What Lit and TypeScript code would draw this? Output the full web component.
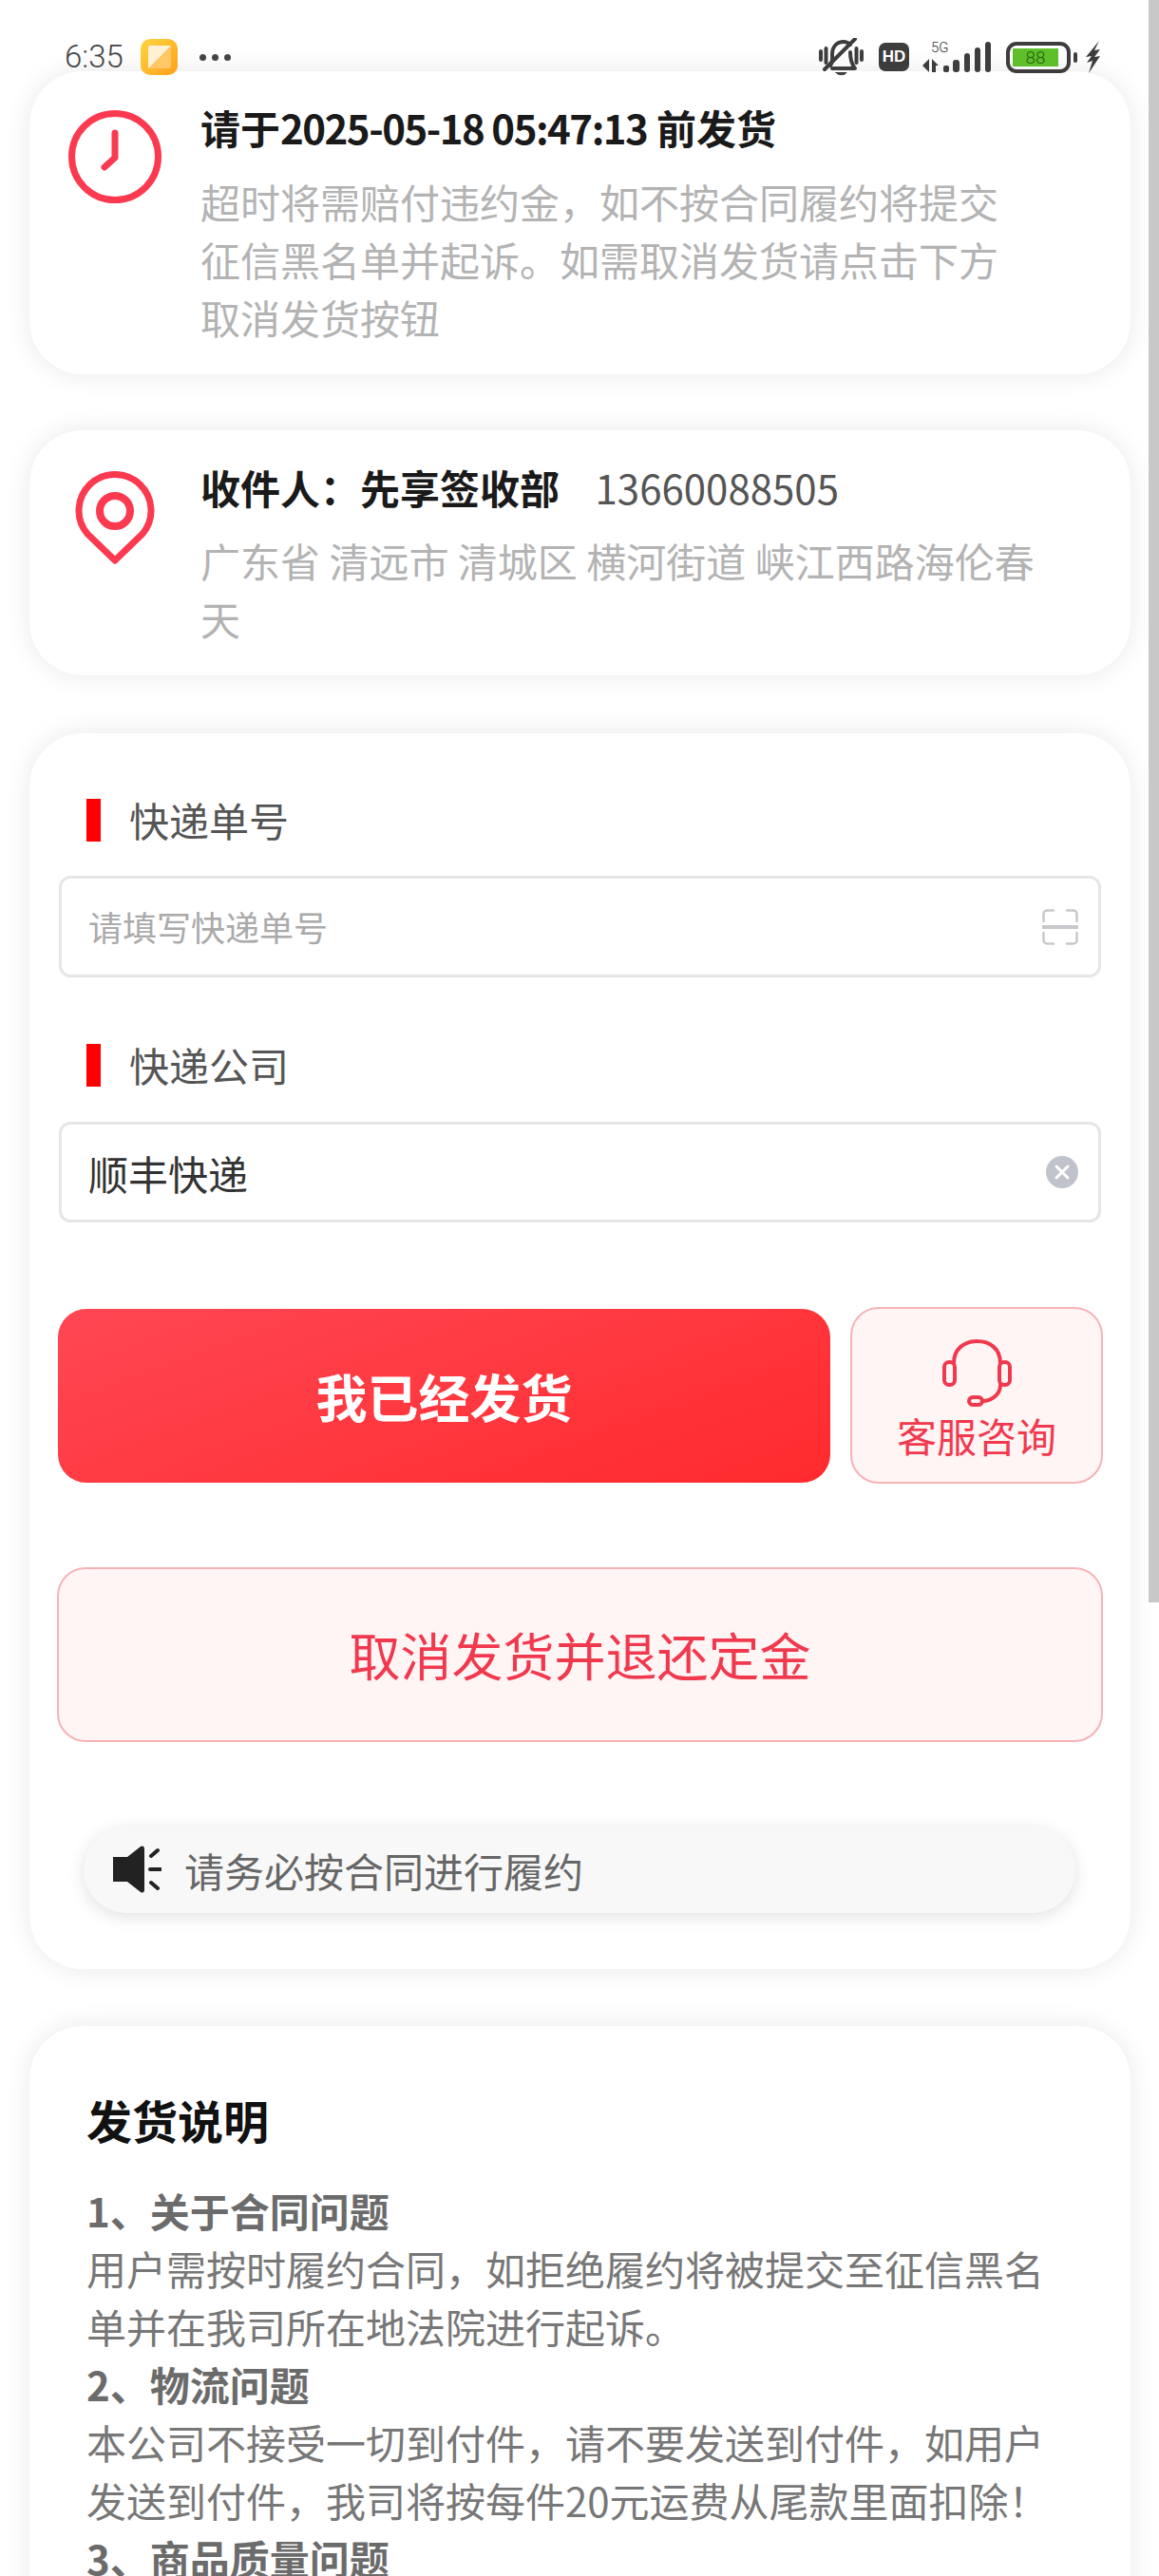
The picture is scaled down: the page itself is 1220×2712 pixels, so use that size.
import { LitElement, html, css } from "lit";
import { customElement } from "lit/decorators.js";

const clockIcon = html`<svg width="98" height="98" viewBox="0 0 98 98" fill="none" stroke="#fb3a50" stroke-width="7" stroke-linecap="round" stroke-linejoin="round">
  <circle cx="49" cy="49" r="45.5"></circle>
  <path d="M49 24V50L38 60"></path>
</svg>`;

const pinIcon = html`<svg width="86" height="99" viewBox="0 0 86 99" fill="none" stroke="#fb3a50" stroke-width="7" stroke-linejoin="round">
  <path d="M43 94L14 66A38 38 0 1 1 72 66Z"></path>
  <circle cx="43" cy="42" r="16" stroke-width="8"></circle>
</svg>`;

const bellIcon = html`<svg width="47" height="40" viewBox="0 0 47 40" fill="none" stroke="#3d3d3d" stroke-width="4" stroke-linecap="round" stroke-linejoin="round">
  <path d="M2 14V23M7.5 11V26M45 14V23M39.5 11V26"></path>
  <path d="M12 29C15 25 14 21 14 17C14 9 19 4 26 4C29 4 31 5 33 7"></path>
  <path d="M33 15C33 22 34 27 38 32H14"></path>
  <path d="M38 1L6 33"></path>
  <path d="M18 36.5H29C27 39.5 20 39.5 18 36.5Z" fill="#3d3d3d" stroke-width="1"></path>
</svg>`;

const signalIcon = html`<svg width="73" height="40" viewBox="0 -3 73 40">
  <text x="9" y="12" font-family="Roboto, sans-serif" font-weight="300" font-size="15" fill="#333">5G</text>
  <g fill="#3d3d3d">
    <polygon points="7,19 7,33 0,26"></polygon>
    <polygon points="10,19 17,26 14,26 14,33 10,33"></polygon>
    <rect x="22" y="26" width="6" height="7" rx="2"></rect>
    <rect x="32" y="20" width="7" height="13" rx="3"></rect>
    <rect x="44" y="13" width="6" height="20" rx="3"></rect>
    <rect x="55" y="7" width="6" height="26" rx="3"></rect>
    <rect x="66" y="1" width="6" height="32" rx="3"></rect>
  </g>
</svg>`;

const boltIcon = html`<svg width="15" height="34" viewBox="0 0 15 34" fill="#3d3d3d">
  <polygon points="14,0 0,17 6,16 1,23 7,21 3,34 15,16 9,17 15,9 9,10"></polygon>
</svg>`;

const appIcon = html`<svg width="39" height="38" viewBox="0 0 39 38">
  <defs>
    <linearGradient id="app" x1="0" y1="0" x2="1" y2="1">
      <stop offset="0" stop-color="#ffd640"></stop>
      <stop offset="1" stop-color="#ff9f1a"></stop>
    </linearGradient>
  </defs>
  <rect width="39" height="38" rx="10" fill="url(#app)"></rect>
  <rect x="8" y="7" width="24" height="24" rx="2" fill="#ffc766"></rect>
  <path d="M8 31V9A2 2 0 0 1 10 7H32Z" fill="#fff1d6"></path>
</svg>`;

const scanIcon = html`<svg width="38" height="38" viewBox="0 0 38 38" fill="none" stroke="#c8c9cc" stroke-width="2.5" stroke-linecap="round">
  <path d="M1.5 13V5A3.5 3.5 0 0 1 5 1.5H12M26 1.5H33A3.5 3.5 0 0 1 36.5 5V13"></path>
  <path d="M1.5 25V33A3.5 3.5 0 0 0 5 36.5H12M26 36.5H33A3.5 3.5 0 0 0 36.5 33V25"></path>
  <path d="M0 19H38" stroke-width="4" stroke-linecap="butt"></path>
</svg>`;

const clearIcon = html`<svg width="34" height="34" viewBox="0 0 34 34">
  <circle cx="17" cy="17" r="17" fill="#c0c3cc"></circle>
  <path d="M11 11L23 23M23 11L11 23" stroke="#fff" stroke-width="3" stroke-linecap="round"></path>
</svg>`;

const headsetIcon = html`<svg width="75" height="75" viewBox="0 0 75 75" fill="none" stroke="#f1394e" stroke-width="4" stroke-linecap="round">
  <rect x="3" y="26" width="11" height="24" rx="5"></rect>
  <rect x="61" y="26" width="11" height="24" rx="5"></rect>
  <path d="M13 27C13 12 24 4 37.5 4C51 4 62 12 62 27"></path>
  <path d="M62 50C62 60 53 67 43 67"></path>
  <rect x="29" y="63" width="14" height="8" rx="4"></rect>
</svg>`;

const speakerIcon = html`<svg width="51" height="51" viewBox="0 0 51 51">
  <path d="M0 12H15L29 1Q33 -1 33 4V46Q33 51 29 49L15 38H0Z" fill="#222"></path>
  <path d="M40 11L47 5M39 25H50M40 39L47 45" stroke="#222" stroke-width="4" stroke-linecap="round" fill="none"></path>
</svg>`;

const sections = [
  ["1、关于合同问题", "用户需按时履约合同，如拒绝履约将被提交至征信黑名单并在我司所在地法院进行起诉。"],
  ["2、物流问题", "本公司不接受一切到付件，请不要发送到付件，如用户发送到付件，我司将按每件20元运费从尾款里面扣除！"],
  ["3、商品质量问题", ""],
];

@customElement("app-root")
export class AppRoot extends LitElement {
  static styles = css`
    :host {
      display: block;
      position: relative;
      width: 1220px;
      height: 2712px;
      overflow: hidden;
      background: #fff;
      font-family: "Noto Sans CJK SC", "Noto Sans", sans-serif;
      font-size: 42px;
      line-height: 61px;
    }

    * {
      box-sizing: border-box;
    }

    .scrollbar {
      position: absolute;
      top: 0;
      right: 0;
      width: 11px;
      height: 1687px;
      background: #c8c8c8;
    }

    .status {
      position: relative;
      z-index: 2;
      display: flex;
      align-items: center;
      height: 40px;
      margin-top: 40px;
      margin-bottom: -5px;
      padding: 0 62px 0 68px;
      color: #444;
    }

    .time {
      width: 80px;
      font-family: Roboto, sans-serif;
      font-weight: 300;
      font-size: 33px;
      line-height: 40px;
    }

    .dots {
      display: flex;
      gap: 6px;
      margin-left: 23px;
    }

    .dots i {
      width: 7px;
      height: 7px;
      border-radius: 50%;
      background: #444;
    }

    .right {
      display: flex;
      align-items: center;
      margin-left: auto;
    }

    .hd {
      width: 32px;
      height: 30px;
      margin: 0 14px 0 16px;
      border-radius: 7px;
      background: #3d3d3d;
      color: #fff;
      font: bold 17px/30px "Liberation Sans", sans-serif;
      text-align: center;
    }

    .battery {
      width: 68px;
      height: 33px;
      margin-left: 15px;
      padding: 3px;
      border: 4px solid #3d3d3d;
      border-radius: 11px;
    }

    .battery span {
      display: block;
      width: 48px;
      height: 19px;
      background: #5fbf2a;
      color: #1f5f0a;
      font: 300 19px/19px Roboto, sans-serif;
      text-align: center;
    }

    .nub {
      width: 4px;
      height: 11px;
      margin: 0 9px 0 3px;
      border-radius: 2px;
      background: #3d3d3d;
    }

    .card {
      width: 1159px;
      margin: 0 0 60px 31px;
      border-radius: 56px;
      background: #fff;
      box-shadow: 0 0 28px rgba(0, 0, 0, 0.09);
    }

    .info {
      display: flex;
      gap: 41px;
      margin-bottom: 59px;
      padding: 28px 99px 30px 41px;
    }

    .info .icon {
      flex: none;
      width: 98px;
      padding-top: 13px;
      line-height: 0;
    }

    .info.address {
      margin-bottom: 61px;
      padding-top: 29px;
    }

    .info.address .icon {
      padding: 14px 0 0 6px;
    }

    .title {
      font-weight: 700;
      color: #1a1a1a;
    }

    .num {
      letter-spacing: -1.5px;
    }

    .phone {
      margin-left: 28px;
      font-weight: 400;
      color: #555;
    }

    .desc {
      margin-top: 17px;
      color: #b3b3b3;
    }

    .address .desc {
      margin-top: 16px;
    }

    .form {
      padding: 69px 29px 59px;
    }

    .label {
      display: flex;
      align-items: flex-start;
      gap: 30px;
      height: 45px;
      margin-left: 31px;
      color: #555;
      line-height: 43px;
    }

    .label::before {
      content: "";
      width: 15px;
      height: 45px;
      background: #f00;
    }

    .field {
      display: flex;
      align-items: center;
      justify-content: space-between;
      height: 107px;
      margin: 36px 2px 70px;
      padding: 0 21px 0 28px;
      border: 3px solid #e6e6e6;
      border-radius: 12px;
    }

    .field svg {
      flex: none;
    }

    .placeholder {
      font-size: 36px;
      color: #aaa;
    }

    .value {
      color: #333;
    }

    .last {
      height: 106px;
      margin: 37px 2px 0;
    }

    .actions {
      display: flex;
      align-items: center;
      gap: 21px;
      margin: 89px 0 0 1px;
    }

    .submit {
      flex: 1;
      height: 183px;
      border-radius: 30px;
      background: linear-gradient(160deg, #ff4753, #ff2a2d);
      color: #fff;
      font-size: 54px;
      font-weight: 700;
      line-height: 183px;
      text-align: center;
    }

    .soft {
      border: 2px solid #f7b2b7;
      border-radius: 30px;
      background: #fff5f5;
      color: #f1394e;
    }

    .service {
      display: flex;
      flex-direction: column;
      align-items: center;
      flex: none;
      width: 266px;
      height: 186px;
      padding-top: 30px;
      line-height: 61px;
    }

    .service svg {
      margin-bottom: -3px;
    }

    .cancel {
      height: 184px;
      margin-top: 88px;
      font-size: 54px;
      line-height: 180px;
      text-align: center;
    }

    .notice {
      display: flex;
      align-items: center;
      height: 91px;
      margin: 89px 29px 0 28px;
      padding-left: 31px;
      gap: 24px;
      border-radius: 46px;
      background: #f8f8f8;
      box-shadow: 0 4px 18px rgba(0, 0, 0, 0.12);
      color: #666;
    }

    .rules {
      padding: 64px 62px 60px 60px;
      color: #777;
    }

    .rules h2 {
      margin: 0 0 31px;
      color: #111;
      font-size: 48px;
      line-height: 68px;
    }

    .rules h3 {
      margin: 0;
      color: #6b6b6b;
      font-size: 42px;
      line-height: 61px;
    }

    .rules p {
      margin: 0;
    }
  `;

  render() {
    return html`
      <div class="status">
        <span class="time">6:35</span>
        ${appIcon}
        <span class="dots"><i></i><i></i><i></i></span>
        <div class="right">
          ${bellIcon}
          <span class="hd">HD</span>
          ${signalIcon}
          <div class="battery"><span>88</span></div>
          <div class="nub"></div>
          ${boltIcon}
        </div>
      </div>

      <section class="card info">
        <div class="icon">${clockIcon}</div>
        <div>
          <div class="title">请于<span class="num">2025-05-18 05:47:13</span> 前发货</div>
          <div class="desc">超时将需赔付违约金，如不按合同履约将提交征信黑名单并起诉。如需取消发货请点击下方取消发货按钮</div>
        </div>
      </section>

      <section class="card info address">
        <div class="icon">${pinIcon}</div>
        <div>
          <div class="title">收件人：先享签收部 <span class="phone">13660088505</span></div>
          <div class="desc">广东省 清远市 清城区 横河街道 峡江西路海伦春天</div>
        </div>
      </section>

      <section class="card form">
        <div class="label">快递单号</div>
        <div class="field">
          <span class="placeholder">请填写快递单号</span>
          ${scanIcon}
        </div>
        <div class="label">快递公司</div>
        <div class="field last">
          <span class="value">顺丰快递</span>
          ${clearIcon}
        </div>
        <div class="actions">
          <div class="submit">我已经发货</div>
          <div class="soft service">${headsetIcon}<span>客服咨询</span></div>
        </div>
        <div class="soft cancel">取消发货并退还定金</div>
        <div class="notice">${speakerIcon}<span>请务必按合同进行履约</span></div>
      </section>

      <section class="card rules">
        <h2>发货说明</h2>
        ${sections.map(
          ([head, text]) => html`<h3>${head}</h3>
            ${text ? html`<p>${text}</p>` : ""}`
        )}
      </section>

      <div class="scrollbar"></div>
    `;
  }
}

declare global {
  interface HTMLElementTagNameMap {
    "app-root": AppRoot;
  }
}
